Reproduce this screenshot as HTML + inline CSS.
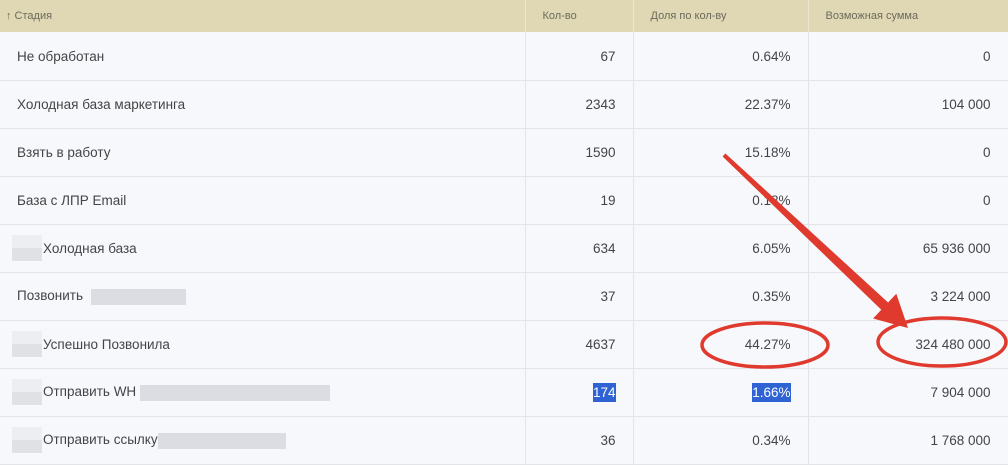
<!DOCTYPE html>
<html><head><meta charset="utf-8"><style>
body{margin:0;width:1008px;height:464px;overflow:hidden;background:#f6f8fc;font-family:"Liberation Sans","DejaVu Sans",sans-serif;position:relative}
table{border-collapse:collapse;width:1008px;table-layout:fixed}
th{height:32px;background:#e0d8b4;color:#6d6a5c;font-size:11px;font-weight:normal;text-align:left;padding:0 0 0 17px;border-right:1px solid #ece6cc}
th.f{padding-left:6px}
td{height:47px;box-sizing:border-box;border-bottom:1px solid #e2e4e8;border-right:1px solid #e2e4e8;color:#444;font-size:13.5px;padding:1px 17px 0;text-align:right;background:#f6f8fc}
tr{height:48px}
td.n{text-align:left}
td.i{padding-left:43px}
.sel{background:#2f63d3;color:#fff;padding:2px 0}
.blur{display:inline-block;background:#dcdde2;height:16px;vertical-align:middle}
.sq{position:absolute;left:12px;width:30px;height:26px;background:linear-gradient(#eceef2 50%,#e0e1e5 50%)}
</style></head><body>
<table>
<colgroup><col style="width:525px"><col style="width:108px"><col style="width:175px"><col style="width:200px"></colgroup>
<tr style="height:32px"><th class="f">↑ Стадия</th><th>Кол-во</th><th>Доля по кол-ву</th><th>Возможная сумма</th></tr>
<tr><td class="n">Не обработан</td><td>67</td><td>0.64%</td><td>0</td></tr>
<tr><td class="n">Холодная база маркетинга</td><td>2343</td><td>22.37%</td><td>104 000</td></tr>
<tr><td class="n">Взять в работу</td><td>1590</td><td>15.18%</td><td>0</td></tr>
<tr><td class="n">База с ЛПР Email</td><td>19</td><td>0.18%</td><td>0</td></tr>
<tr><td class="n i">Холодная база</td><td>634</td><td>6.05%</td><td>65 936 000</td></tr>
<tr><td class="n">Позвонить <span class="blur" style="width:95px;margin-left:4px"></span></td><td>37</td><td>0.35%</td><td>3 224 000</td></tr>
<tr><td class="n i">Успешно Позвонила</td><td>4637</td><td>44.27%</td><td>324 480 000</td></tr>
<tr><td class="n i">Отправить WH <span class="blur" style="width:190px"></span></td><td><span class="sel">174</span></td><td><span class="sel">1.66%</span></td><td>7 904 000</td></tr>
<tr><td class="n i">Отправить ссылку<span class="blur" style="width:128px"></span></td><td>36</td><td>0.34%</td><td>1 768 000</td></tr>
</table>
<div class="sq" style="top:235px"></div>
<div class="sq" style="top:331px"></div>
<div class="sq" style="top:379px"></div>
<div class="sq" style="top:427px"></div>
<svg style="position:absolute;left:0;top:0" width="1008" height="464">
<ellipse cx="765" cy="345" rx="63" ry="22" fill="none" stroke="#e03a2f" stroke-width="3.5"/>
<ellipse cx="942" cy="342" rx="64" ry="24" fill="none" stroke="#e03a2f" stroke-width="3.5"/>
<polygon points="725.4,153.5 888.1,302.5 896.3,293.7 908,328 873.1,318.5 881.3,309.8 722.6,156.5" fill="#e0392e"/>
</svg>
</body></html>
